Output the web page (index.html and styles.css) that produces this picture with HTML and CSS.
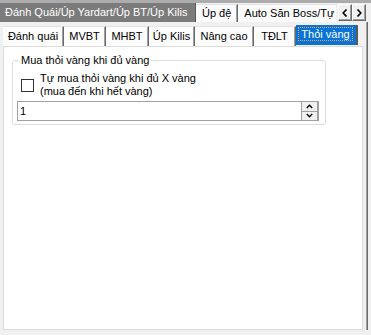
FILE: index.html
```html
<!DOCTYPE html>
<html lang="vi">
<head>
<meta charset="utf-8">
<title>Thỏi vàng</title>
<link rel="stylesheet" href="styles.css">
</head>
<body>
<div class="window">
  <div class="outer-strip">
    <div class="otab otab-sel">Đánh Quái/Úp Yardart/Úp BT/Úp Kilis</div>
    <div class="otab">Úp đệ</div>
    <div class="otab otab-clip">Auto Săn Boss/Tự động</div>
    <div class="scroll">
      <span class="sbtn"><svg width="6" height="8" viewBox="0 0 6 8"><polyline points="4.5,0.5 1.2,4 4.5,7.5" fill="none" stroke="#000" stroke-width="1.6"/></svg></span>
      <span class="sbtn"><svg width="6" height="8" viewBox="0 0 6 8"><polyline points="1.5,0.5 4.8,4 1.5,7.5" fill="none" stroke="#000" stroke-width="1.6"/></svg></span>
    </div>
  </div>
  <div class="outer-page">
    <div class="inner-strip">
      <div class="itab">Đánh quái</div>
      <div class="itab">MVBT</div>
      <div class="itab">MHBT</div>
      <div class="itab">Úp Kilis</div>
      <div class="itab">Nâng cao</div>
      <div class="itab">TĐLT</div>
      <div class="itab itab-sel"><span class="focus">Thỏi vàng</span></div>
    </div>
    <div class="inner-page">
      <fieldset class="group">
        <legend class="group-title">Mua thỏi vàng khi đủ vàng</legend>
        <div class="check-row">
          <span class="checkbox"></span>
          <div class="check-label">Tự mua thỏi vàng khi đủ X vàng<br>(mua đến khi hết vàng)</div>
        </div>
        <div class="numeric">
          <span class="num-value">1</span>
          <div class="spin">
            <span class="spin-btn"><svg width="7" height="5" viewBox="0 0 7 5"><polyline points="0.8,4 3.5,1.2 6.2,4" fill="none" stroke="#000" stroke-width="1.3"/></svg></span>
            <span class="spin-btn"><svg width="7" height="5" viewBox="0 0 7 5"><polyline points="0.8,1 3.5,3.8 6.2,1" fill="none" stroke="#000" stroke-width="1.3"/></svg></span>
          </div>
        </div>
      </fieldset>
    </div>
  </div>
</div>
</body>
</html>
```
FILE: styles.css
```css
html, body {
  margin: 0;
  padding: 0;
  background: #f0f0f0;
}
body {
  width: 371px;
  height: 335px;
  overflow: hidden;
  font-family: "Liberation Sans", Arial, sans-serif;
  font-size: 11px;
  line-height: 13px;
  color: #000;
}
.window {
  width: 371px;
  height: 335px;
}
.outer-strip {
  box-sizing: border-box;
  height: 22px;
  border-top: 3px solid #acacac;
  display: flex;
  align-items: flex-end;
  white-space: nowrap;
}
.otab {
  box-sizing: border-box;
  height: 18px;
  line-height: 17px;
  padding: 0 6px;
  background: #fbfbfb;
  border-top: 1px solid #e3e3e3;
  border-right: 1px solid #696969;
  box-shadow: inset -1px 0 #a0a0a0;
}
.otab-sel {
  width: 196px;
  height: 19px;
  line-height: 19px;
  padding: 0 5px;
  border-top: none;
  background: #7b7b7b;
  color: #fff;
  box-shadow: none;
  border-right: 1px solid #5a5a5a;
}
.otab-clip {
  width: 98px;
  overflow: hidden;
  border-right: none;
  box-shadow: none;
}
.scroll {
  align-self: flex-start;
  margin-top: 1px;
  margin-left: 2px;
  display: flex;
}
.sbtn {
  box-sizing: border-box;
  width: 14px;
  height: 17px;
  background: #f0f0f0;
  border-top: 1px solid #fff;
  border-left: 1px solid #fff;
  border-right: 1px solid #696969;
  border-bottom: 1px solid #696969;
  box-shadow: inset -1px -1px #a0a0a0;
  display: flex;
  align-items: center;
  justify-content: center;
}
.outer-page {
  box-sizing: border-box;
  width: 367px;
  height: 308px;
  padding: 3px 3px 0 3px;
  border-right: 1px solid #a0a0a0;
  box-shadow: 1px 0 0 #696969;
}
.inner-strip {
  display: grid;
  grid-template-columns: 61px 42px 43px 46px 59px 42px 62px;
  align-items: end;
  height: 21px;
}
.itab {
  box-sizing: border-box;
  height: 20px;
  line-height: 19px;
  text-align: center;
  white-space: nowrap;
  background: #fcfcfc;
  border-top: 1px solid #e3e3e3;
  border-right: 1px solid #696969;
  box-shadow: inset -1px 0 #a0a0a0;
}
.itab-sel {
  height: 20px;
  margin-bottom: 1px;
  padding: 2px 3px 2px 2px;
  line-height: 14px;
  background: #0a74d6;
  color: #fff;
  border-top: none;
  border-right: 2px solid #5a5a5a;
  box-shadow: none;
}
.focus {
  display: block;
  height: 14px;
  border: 1px dotted #f5a04a;
  box-sizing: border-box;
  line-height: 12px;
}
.inner-page {
  box-sizing: border-box;
  width: 360px;
  height: 284px;
  background: #fff;
  border: 1px solid #dcdcdc;
  padding: 7px 0 0 8px;
}
.group {
  box-sizing: border-box;
  width: 314px;
  margin: 0;
  padding: 5px 5px 3px 4px;
  border: 1px solid #d8dfe4;
  border-radius: 3px;
  min-inline-size: 0;
}
.group-title {
  margin-left: 1px;
  padding: 0 2px 0 3px;
  line-height: 13px;
}
.check-row {
  display: flex;
  align-items: center;
  gap: 6px;
}
.checkbox {
  box-sizing: border-box;
  width: 13px;
  height: 13px;
  margin-left: 4px;
  margin-top: 1px;
  border: 1px solid #333;
  background: #fff;
}
.check-label {
  line-height: 13px;
}
.numeric {
  box-sizing: border-box;
  margin-top: 3px;
  width: 302px;
  height: 20px;
  border: 1px solid #a0a0a0;
  border-right-width: 2px;
  display: flex;
  align-items: stretch;
}
.num-value {
  flex: 1;
  padding-left: 2px;
  line-height: 18px;
}
.spin {
  width: 15px;
  display: flex;
  flex-direction: column;
  gap: 1px;
  background: #a0a0a0;
  padding-left: 1px;
}
.spin-btn {
  flex: 1;
  background: #f0f0f0;
  display: flex;
  align-items: center;
  justify-content: center;
}
```
